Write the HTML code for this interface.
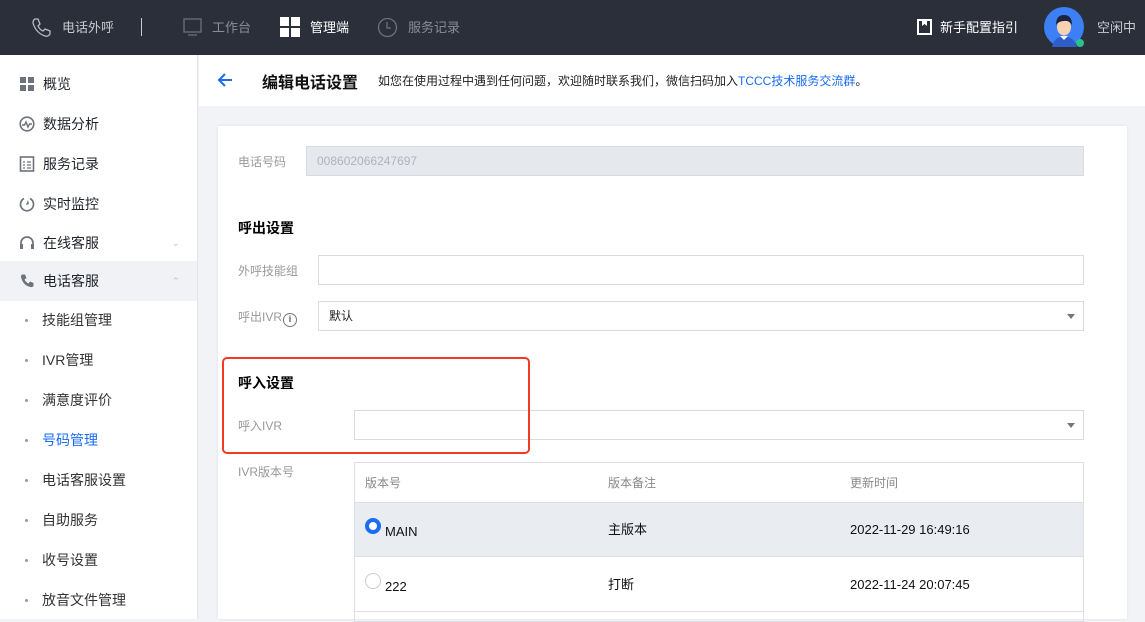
<!DOCTYPE html>
<html><head><meta charset="utf-8"><style>
*{margin:0;padding:0;box-sizing:border-box}
body{width:1145px;height:619px;overflow:hidden;font-family:"Liberation Sans","Noto Sans CJK SC",sans-serif;background:#f2f3f6;position:relative}
.top{position:absolute;left:0;top:0;width:1145px;height:55px;background:#2b2f3a;color:#c8cad0;font-size:13px}
.top .it{position:absolute;top:0;height:55px;line-height:55px}
.side{position:absolute;left:0;top:55px;width:198px;height:564px;background:#fff;border-right:1px solid #e2e4ea}
.side .m{position:absolute;left:0;width:197px;height:40px;line-height:40px;font-size:14px;color:#1f2329}
.side .m .ic{position:absolute;left:19px;top:12px;width:16px;height:16px}
.side .m span.t{position:absolute;left:43px}
.side .s{position:absolute;left:42px;font-size:14px;color:#333;line-height:20px}
.side .s:before{content:"";position:absolute;left:-17px;top:9px;width:3px;height:3px;border-radius:50%;background:#999}
.hdr{position:absolute;left:199px;top:55px;width:946px;height:51px;background:#fff}
.card{position:absolute;left:218px;top:126px;width:909px;height:493px;background:#fff;box-shadow:0 0 3px rgba(0,0,0,.08)}
.lab{position:absolute;font-size:12px;color:#999}
.inp{position:absolute;height:30px;border:1px solid #d9dbe1;background:#fff;font-size:12px;line-height:28px;padding-left:10px;color:#222}
.h{position:absolute;font-size:14px;font-weight:bold;color:#000}
.arr{position:absolute;right:8px;top:12px;width:0;height:0;border-left:4px solid transparent;border-right:4px solid transparent;border-top:5px solid #777}
.row{position:absolute;left:0;width:728px;height:54px;border-bottom:1px solid #dcdfe5;font-size:13px;color:#111;line-height:54px}
.row span{position:absolute;top:0}
</style></head><body>
<div class="top">
 <svg style="position:absolute;left:30px;top:17px" width="22" height="22" viewBox="0 0 22 22"><path d="M5 2 L8 2 L10 7 L8 9 Q10 13 13 14 L15 12 L20 14 L20 17 Q18 20 15 19 Q6 16 3 6 Q3 3 5 2Z" fill="none" stroke="#b9bcc4" stroke-width="1.3"/></svg>
 <div class="it" style="left:62px">电话外呼</div>
 <div style="position:absolute;left:141px;top:18px;width:1px;height:18px;background:#c8cad0"></div>
 <svg style="position:absolute;left:183px;top:18px" width="20" height="19"><rect x="1" y="1" width="17" height="13" fill="none" stroke="#6c707a" stroke-width="1.3"/><line x1="5" y1="17" x2="14" y2="17" stroke="#6c707a" stroke-width="1.3"/></svg>
 <div class="it" style="left:212px;color:#8a8d95">工作台</div>
 <div style="position:absolute;left:280px;top:17px;width:9px;height:9px;background:#fff"></div>
 <div style="position:absolute;left:291px;top:17px;width:9px;height:9px;background:#fff"></div>
 <div style="position:absolute;left:280px;top:28px;width:9px;height:9px;background:#fff"></div>
 <div style="position:absolute;left:291px;top:28px;width:9px;height:9px;background:#fff"></div>
 <div class="it" style="left:310px;color:#fff">管理端</div>
 <svg style="position:absolute;left:377px;top:17px" width="21" height="21"><circle cx="10.5" cy="10.5" r="9" fill="none" stroke="#6c707a" stroke-width="1.3"/><path d="M10 5v6h4" fill="none" stroke="#6c707a" stroke-width="1.3"/></svg>
 <div class="it" style="left:408px;color:#8a8d95">服务记录</div>
 <svg style="position:absolute;left:917px;top:19px" width="15" height="16"><rect x="1" y="1" width="13" height="14" fill="none" stroke="#fff" stroke-width="2"/><path d="M5 1v6l2.5-2 2.5 2V1" fill="#fff"/></svg>
 <div class="it" style="left:940px;color:#fff">新手配置指引</div>
 <svg style="position:absolute;left:1044px;top:7px" width="42" height="42"><circle cx="20" cy="20" r="20" fill="#3d7ff5"/><path d="M8 40 Q10 30 20 29 Q30 30 33 40Z" fill="#2f5ec8"/><path d="M16 29 L20 33 L24 29Z" fill="#fff"/><ellipse cx="20" cy="20" rx="7" ry="8.5" fill="#f6d2b0"/><path d="M12 18 Q12 8 20 8 Q28 8 28 18 Q25 13 20 14 Q15 14 12 18Z" fill="#1c2340"/><circle cx="36" cy="36" r="4" fill="#2dc08d"/></svg>
 <div class="it" style="left:1097px">空闲中</div>
</div>
<div class="side">
 <div class="m" style="top:9px"><svg class="ic" viewBox="0 0 16 16"><rect x="1" y="1" width="6" height="6" fill="#6d737d"/><rect x="9" y="1" width="6" height="6" fill="#6d737d"/><rect x="1" y="9" width="6" height="6" fill="#6d737d"/><rect x="9" y="9" width="6" height="6" fill="#6d737d"/></svg><span class="t">概览</span></div>
 <div class="m" style="top:49px"><svg class="ic" viewBox="0 0 16 16"><circle cx="8" cy="8" r="6.8" fill="none" stroke="#6d737d" stroke-width="1.6"/><path d="M3 9h2.5l1.5-3 2 5 1.5-3H13" fill="none" stroke="#6d737d" stroke-width="1.4"/></svg><span class="t">数据分析</span></div>
 <div class="m" style="top:89px"><svg class="ic" viewBox="0 0 16 16"><rect x="1.5" y="1" width="13" height="14" fill="none" stroke="#6d737d" stroke-width="1.6"/><path d="M4 6h2M8 6h4M4 9h2M8 9h4M4 12h2M8 12h4" stroke="#6d737d" stroke-width="1.3"/></svg><span class="t">服务记录</span></div>
 <div class="m" style="top:129px"><svg class="ic" viewBox="0 0 16 16"><path d="M5 2.5A6.5 6.5 0 1 0 11 2.5" fill="none" stroke="#6d737d" stroke-width="1.7"/><path d="M9 4 L7 9 L10 8Z" fill="#6d737d"/></svg><span class="t">实时监控</span></div>
 <div class="m" style="top:168px"><svg class="ic" viewBox="0 0 16 16"><path d="M2 10V8a6 6 0 0 1 12 0v2" fill="none" stroke="#6d737d" stroke-width="1.7"/><rect x="1" y="9" width="3" height="5" fill="#6d737d"/><rect x="12" y="9" width="3" height="5" fill="#6d737d"/></svg><span class="t">在线客服</span><span style="position:absolute;left:172px;font-size:9px;color:#bbb">⌄</span></div>
 <div class="m" style="top:206px;background:#f1f2f5"><svg class="ic" viewBox="0 0 16 16"><path d="M3 1.5h3l1.5 3.5-2 1.5q1.5 3 4 4l1.5-2 3.5 1.5v3q-1 1.5-3 1Q4 12.5 2 4q0-2 1-2.5Z" fill="#6d737d"/></svg><span class="t">电话客服</span><span style="position:absolute;left:172px;font-size:9px;color:#bbb">⌃</span></div>
 <div class="s" style="top:255px">技能组管理</div>
 <div class="s" style="top:295px">IVR管理</div>
 <div class="s" style="top:335px">满意度评价</div>
 <div class="s" style="top:375px;color:#1a6bf5">号码管理</div>
 <div class="s" style="top:415px">电话客服设置</div>
 <div class="s" style="top:455px">自助服务</div>
 <div class="s" style="top:495px">收号设置</div>
 <div class="s" style="top:535px">放音文件管理</div>
</div>
<div class="hdr">
 <svg style="position:absolute;left:18px;top:17px" width="16" height="16"><path d="M15 8H2M8 2L2 8l6 6" fill="none" stroke="#1a6bf5" stroke-width="2"/></svg>
 <div style="position:absolute;left:63px;top:14px;font-size:16px;font-weight:bold;color:#111">编辑电话设置</div>
 <div style="position:absolute;left:179px;top:17px;font-size:12px;color:#222">如您在使用过程中遇到任何问题，欢迎随时联系我们，微信扫码加入<span style="color:#1a6bf5">TCCC技术服务交流群</span>。</div>
</div>
<div class="card">
 <div class="lab" style="left:20px;top:27px">电话号码</div>
 <div class="inp" style="left:88px;top:20px;width:778px;background:#e5e8ed;color:#b0b3b9">008602066247697</div>
 <div class="h" style="left:20px;top:92px">呼出设置</div>
 <div class="lab" style="left:20px;top:136px">外呼技能组</div>
 <div class="inp" style="left:100px;top:129px;width:766px"></div>
 <div class="lab" style="left:20px;top:182px">呼出IVR<span style="display:inline-block;width:14px;height:14px;border:1.3px solid #777;border-radius:50%;font-size:9px;line-height:11px;text-align:center;color:#555;font-weight:bold;vertical-align:-1px;margin-left:1px">i</span></div>
 <div class="inp" style="left:100px;top:175px;width:766px">默认<div class="arr"></div></div>
 <div class="h" style="left:20px;top:247px">呼入设置</div>
 <div class="lab" style="left:20px;top:291px">呼入IVR</div>
 <div class="inp" style="left:136px;top:284px;width:730px"><div class="arr"></div></div>
 <div style="position:absolute;left:4px;top:231px;width:308px;height:97px;border:2.5px solid #f23b24;border-radius:5px"></div>
 <div class="lab" style="left:20px;top:337px">IVR版本号</div>
 <div style="position:absolute;left:136px;top:336px;width:730px;height:160px;border:1px solid #dcdfe5">
  <div style="position:absolute;left:0;top:0;width:728px;height:40px;border-bottom:1px solid #dcdfe5;font-size:12px;color:#888;line-height:40px">
   <span style="position:absolute;left:10px">版本号</span><span style="position:absolute;left:253px">版本备注</span><span style="position:absolute;left:495px">更新时间</span></div>
  <div class="row" style="top:40px;background:#e9ecf0">
   <span style="left:10px;top:15px;width:16px;height:16px;border-radius:50%;border:4.5px solid #1a6bf5;background:#fff"></span>
   <span style="left:30px;top:2px">MAIN</span><span style="left:253px">主版本</span><span style="left:495px">2022-11-29 16:49:16</span></div>
  <div class="row" style="top:95px">
   <span style="left:10px;top:15px;width:16px;height:16px;border-radius:50%;border:1px solid #c8ccd4;background:#fff"></span>
   <span style="left:30px;top:2px">222</span><span style="left:253px">打断</span><span style="left:495px">2022-11-24 20:07:45</span></div>
 </div>
</div>
</body></html>
